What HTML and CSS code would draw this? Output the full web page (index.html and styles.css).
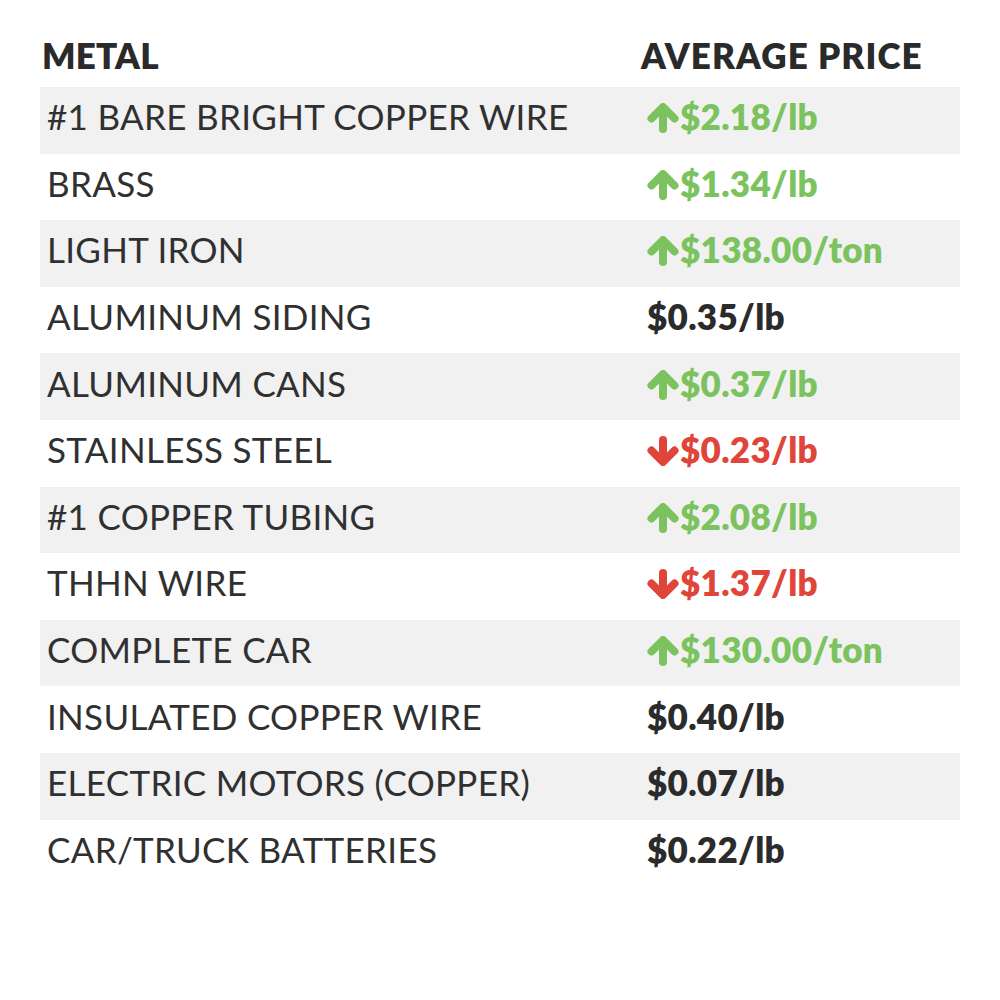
FILE: index.html
```html
<!DOCTYPE html>
<html>
<head>
<meta charset="utf-8">
<link rel="stylesheet" href="styles.css">
</head>
<body>
<div class="page">
  <table class="prices">
    <thead>
      <tr><th class="c-metal">METAL</th><th class="c-price">AVERAGE PRICE</th></tr>
    </thead>
    <tbody>
      <tr><td class="name">#1 BARE BRIGHT COPPER WIRE</td><td class="price up"><svg class="arr" viewBox="0 0 32 30"><path d="M4.5 15.5 L16 4 L27.5 15.5 M16 5 L16 26"/></svg>$2.18/lb</td></tr>
      <tr><td class="name">BRASS</td><td class="price up"><svg class="arr" viewBox="0 0 32 30"><path d="M4.5 15.5 L16 4 L27.5 15.5 M16 5 L16 26"/></svg>$1.34/lb</td></tr>
      <tr><td class="name">LIGHT IRON</td><td class="price up"><svg class="arr" viewBox="0 0 32 30"><path d="M4.5 15.5 L16 4 L27.5 15.5 M16 5 L16 26"/></svg>$138.00/ton</td></tr>
      <tr><td class="name">ALUMINUM SIDING</td><td class="price">$0.35/lb</td></tr>
      <tr><td class="name">ALUMINUM CANS</td><td class="price up"><svg class="arr" viewBox="0 0 32 30"><path d="M4.5 15.5 L16 4 L27.5 15.5 M16 5 L16 26"/></svg>$0.37/lb</td></tr>
      <tr><td class="name">STAINLESS STEEL</td><td class="price down"><svg class="arr" viewBox="0 0 32 30"><path d="M4.5 14.5 L16 26 L27.5 14.5 M16 25 L16 4"/></svg>$0.23/lb</td></tr>
      <tr><td class="name">#1 COPPER TUBING</td><td class="price up"><svg class="arr" viewBox="0 0 32 30"><path d="M4.5 15.5 L16 4 L27.5 15.5 M16 5 L16 26"/></svg>$2.08/lb</td></tr>
      <tr><td class="name">THHN WIRE</td><td class="price down"><svg class="arr" viewBox="0 0 32 30"><path d="M4.5 14.5 L16 26 L27.5 14.5 M16 25 L16 4"/></svg>$1.37/lb</td></tr>
      <tr><td class="name">COMPLETE CAR</td><td class="price up"><svg class="arr" viewBox="0 0 32 30"><path d="M4.5 15.5 L16 4 L27.5 15.5 M16 5 L16 26"/></svg>$130.00/ton</td></tr>
      <tr><td class="name">INSULATED COPPER WIRE</td><td class="price">$0.40/lb</td></tr>
      <tr><td class="name">ELECTRIC MOTORS (COPPER)</td><td class="price">$0.07/lb</td></tr>
      <tr><td class="name">CAR/TRUCK BATTERIES</td><td class="price">$0.22/lb</td></tr>
    </tbody>
  </table>
</div>
</body>
</html>
```
FILE: styles.css
```css
html, body {
  margin: 0;
  padding: 0;
  background: #ffffff;
}
body {
  font-family: "Lato", "Liberation Sans", sans-serif;
  color: #2e2e2e;
}
.page {
  padding: 33px 40px 0 40px;
}
.prices {
  width: 920px;
  border-collapse: collapse;
  table-layout: fixed;
}
.prices th {
  font-weight: 800;
  font-size: 35px;
  text-align: left;
  height: 54px;
  box-sizing: border-box;
  padding: 0 0 10px 2px;
  vertical-align: middle;
  color: #2a2a2a;
  letter-spacing: 0.2px;
}
.prices th.c-price {
  letter-spacing: 1.1px;
}
.c-metal { width: 599px; }
.prices td {
  height: 66.6px;
  box-sizing: border-box;
  padding: 0 0 8px 0;
  font-size: 35px;
  vertical-align: middle;
  white-space: nowrap;
}
.prices tbody tr:nth-child(odd) td {
  background: #f1f1f1;
}
.name {
  padding-left: 7px !important;
  color: #303030;
  letter-spacing: 0.3px;
}
.price {
  padding-left: 8px !important;
  font-weight: 800;
  color: #2b2b2b;
  letter-spacing: 0.3px;
}
.price.up { color: #7cc35f; }
.price.down { color: #e0453a; }
.arr {
  width: 32px;
  height: 30px;
  vertical-align: -3px;
  margin-right: 1px;
  fill: none;
  stroke-width: 8;
  stroke-linecap: round;
  stroke-linejoin: round;
}
.up .arr { stroke: #7cc35f; }
.down .arr { stroke: #e0453a; }
```
